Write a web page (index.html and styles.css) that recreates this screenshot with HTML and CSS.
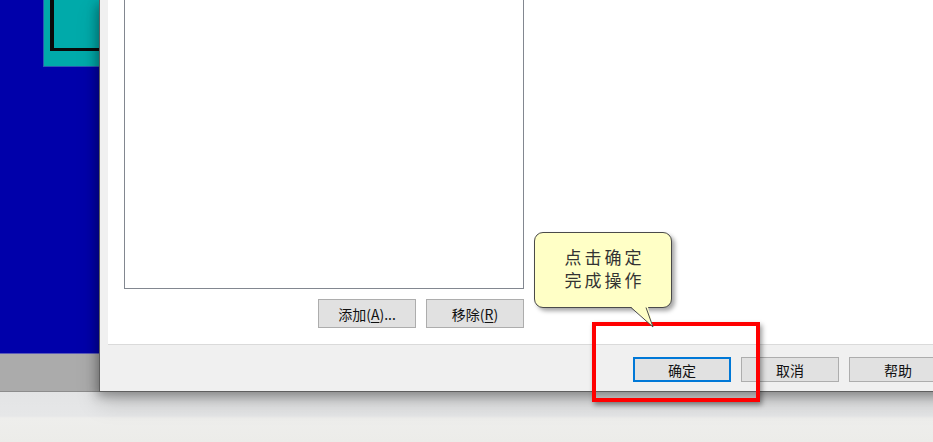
FILE: index.html
```html
<!DOCTYPE html>
<html lang="zh-CN">
<head>
<meta charset="utf-8">
<title>确定</title>
<link rel="stylesheet" href="styles.css">
</head>
<body>
<div class="screen">
  <div class="top">
    <div class="side">
      <div class="blue">
        <div class="teal"><div class="frame"></div></div>
      </div>
      <div class="gray"></div>
    </div>
    <div class="dialog">
      <div class="panel">
        <div class="listcol">
          <div class="listbox"></div>
          <div class="row">
            <button class="btn">添加(<u>A</u>)...</button>
            <button class="btn">移除(<u>R</u>)</button>
          </div>
        </div>
      </div>
      <div class="footer">
        <button class="btn btn-small btn-default">确定</button>
        <button class="btn btn-small">取消</button>
        <button class="btn btn-small">帮助</button>
      </div>
    </div>
  </div>
  <div class="floor"></div>

  <div class="callout">
    <div class="callout-text">点击确定<br>完成操作</div>
    <svg class="tail" width="30" height="26" viewBox="0 0 30 26">
      <path d="M2 0 L19 0 L24 20 Z" fill="#ffffc6" stroke="none"/>
      <path d="M2 0.5 L24 20 L17 0.5" fill="none" stroke="#4a4a4a" stroke-width="1"/>
    </svg>
  </div>
  <div class="highlight"></div>
</div>
</body>
</html>
```
FILE: styles.css
```css
html, body {
  margin: 0;
  padding: 0;
}
body {
  width: 933px;
  height: 442px;
  overflow: hidden;
  background: #eeeeec;
  font-family: "Noto Sans CJK SC", "Noto Sans", sans-serif;
}
.screen {
  position: relative;
  width: 933px;
  height: 442px;
  overflow: hidden;
}
.top {
  display: flex;
  height: 392px;
}
.side {
  width: 99px;
  flex: none;
  display: flex;
  flex-direction: column;
}
.blue {
  height: 354px;
  background: #0000aa;
  padding-left: 43px;
  border-bottom: 1px solid #5a5ab8;
  box-sizing: border-box;
}
.teal {
  height: 67px;
  background: #00aaaa;
  border-left: 1px solid #2b57b3;
  border-bottom: 1px solid #2b57b3;
  box-sizing: border-box;
  padding-left: 6px;
}
.frame {
  height: 51px;
  border-left: 4px solid #0a0a0a;
  border-bottom: 3px solid #0a0a0a;
  box-sizing: border-box;
}
.gray {
  height: 37px;
  background: #ababab;
  border-bottom: 1px solid #8c8c8c;
}
.dialog {
  position: relative;
  z-index: 1;
  width: 859px;
  flex: none;
  background: #f0f0f0;
  border-left: 1px solid #5f5f5f;
  border-bottom: 1px solid #5f5f5f;
  box-sizing: border-box;
  padding-left: 8px;
  box-shadow: -2px 4px 10px rgba(0, 0, 0, 0.3), 0 10px 22px rgba(0, 0, 0, 0.18);
  display: flex;
  flex-direction: column;
}
.panel {
  height: 345px;
  background: #ffffff;
  border-bottom: 1px solid #dadada;
  box-sizing: border-box;
  padding-left: 16px;
}
.listcol {
  width: 400px;
  display: flex;
  flex-direction: column;
}
.listbox {
  height: 289px;
  border: 1px solid #828790;
  border-top: none;
  box-sizing: border-box;
  background: #fff;
}
.row {
  display: flex;
  justify-content: flex-end;
  gap: 10px;
  margin-top: 10px;
}
.btn {
  width: 98px;
  height: 29px;
  background: #e1e1e1;
  border: 1px solid #adadad;
  box-sizing: border-box;
  font-family: "Noto Sans CJK SC", "Noto Sans", sans-serif;
  font-size: 14px;
  color: #111;
  padding: 0;
  line-height: 1;
}
.btn u {
  text-decoration-thickness: 1px;
  text-underline-offset: 2px;
}
.footer {
  display: flex;
  justify-content: flex-end;
  gap: 10px;
  padding-top: 12px;
  padding-right: 11px;
}
.btn-small {
  height: 25px;
}
.btn-default {
  border: 2px solid #0078d7;
}
.floor {
  height: 50px;
  background: linear-gradient(#e3e4e5 0, #e6e7e8 24px, #eeeeec 26px, #ecece9 100%);
}
.callout {
  position: absolute;
  left: 534px;
  top: 232px;
  width: 138px;
  height: 76px;
  box-sizing: border-box;
  background: #ffffc6;
  border: 1px solid #4a4a4a;
  border-radius: 9px;
  box-shadow: 3px 3px 4px rgba(0, 0, 0, 0.35);
  z-index: 3;
}
.callout-text {
  padding-top: 12px;
  text-align: center;
  font-size: 17px;
  line-height: 23px;
  letter-spacing: 3px;
  padding-left: 3px;
  color: #333333;
}
.tail {
  position: absolute;
  left: 94px;
  top: 74px;
}
.highlight {
  position: absolute;
  left: 592px;
  top: 322px;
  width: 168px;
  height: 80px;
  box-sizing: border-box;
  border: 4px solid #ff0000;
  box-shadow: 2px 3px 5px rgba(0, 0, 0, 0.4);
  z-index: 2;
}
```
